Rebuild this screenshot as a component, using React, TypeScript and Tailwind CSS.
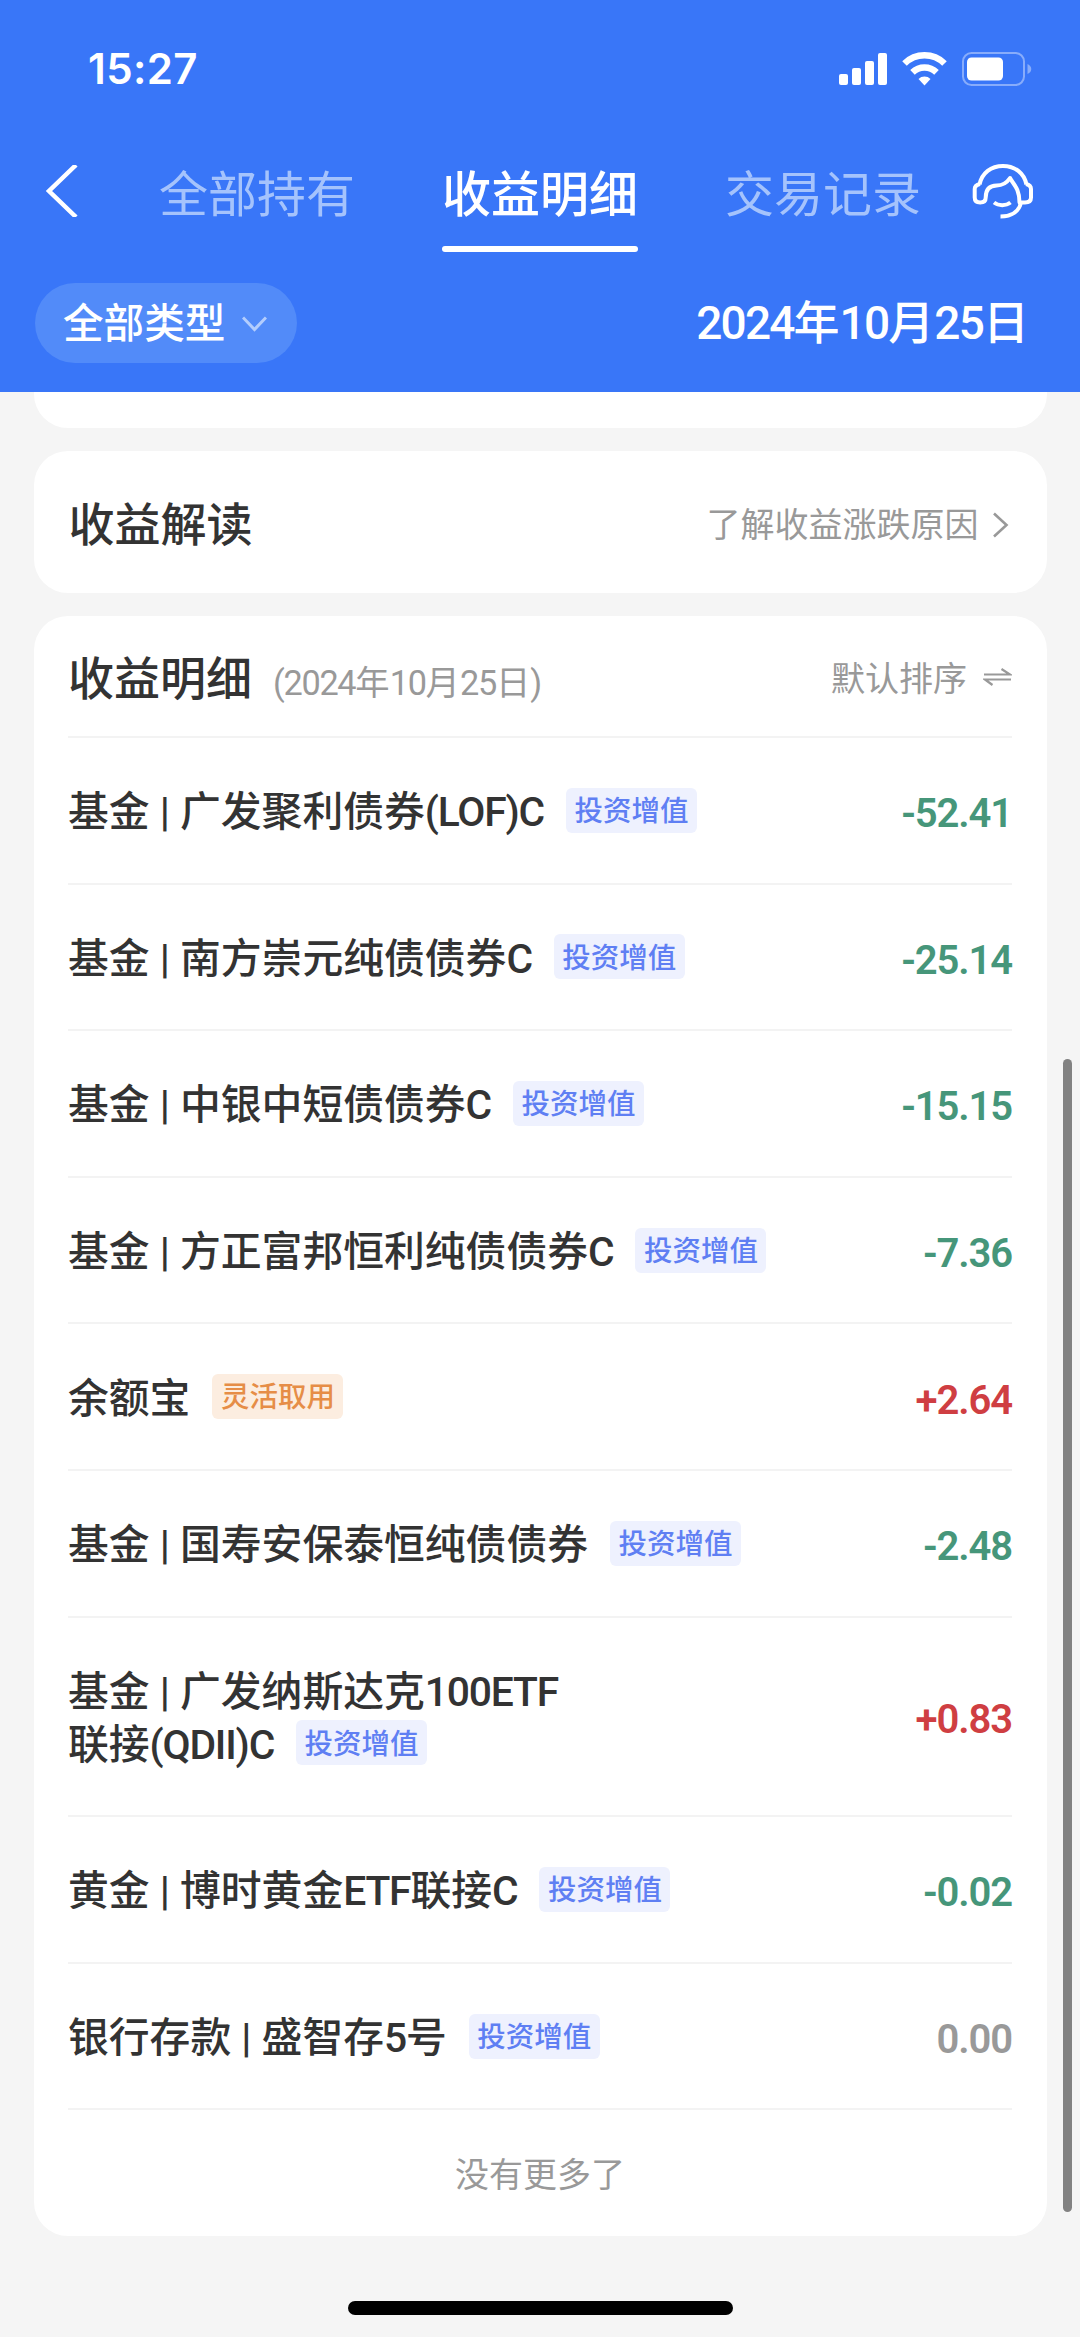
import React from "react";

type Tag = "grow" | "flex";

interface Holding {
  lines: string[];
  tag: Tag;
  amount: string;
}

const holdings: Holding[] = [
  { lines: ["基金 | 广发聚利债券(LOF)C"], tag: "grow", amount: "-52.41" },
  { lines: ["基金 | 南方崇元纯债债券C"], tag: "grow", amount: "-25.14" },
  { lines: ["基金 | 中银中短债债券C"], tag: "grow", amount: "-15.15" },
  { lines: ["基金 | 方正富邦恒利纯债债券C"], tag: "grow", amount: "-7.36" },
  { lines: ["余额宝"], tag: "flex", amount: "+2.64" },
  { lines: ["基金 | 国寿安保泰恒纯债债券"], tag: "grow", amount: "-2.48" },
  { lines: ["基金 | 广发纳斯达克100ETF", "联接(QDII)C"], tag: "grow", amount: "+0.83" },
  { lines: ["黄金 | 博时黄金ETF联接C"], tag: "grow", amount: "-0.02" },
  { lines: ["银行存款 | 盛智存5号"], tag: "grow", amount: "0.00" },
];

const amountColor = (amount: string) => {
  if (amount.startsWith("+")) return "text-[#cf3e42]";
  if (amount.startsWith("-")) return "text-[#46967a]";
  return "text-[#999999]";
};

// Latin letters and digits sit tighter than the Chinese text around them
const Mixed = ({ text, latin }: { text: string; latin: string }) => (
  <>
    {text.split(/([A-Z0-9()]+)/).map((part, i) =>
      i % 2 ? (
        <span key={i} className={latin}>
          {part}
        </span>
      ) : (
        part
      )
    )}
  </>
);

const StatusBar = () => (
  <div className="flex h-[137px] items-center justify-between pl-[88px] pr-[48px]">
    <span className="font-['Inter'] text-[42px] font-semibold leading-none tracking-[0.4px]">15:27</span>
    <div className="flex items-center gap-[15px]">
      <svg width="48" height="34" viewBox="0 0 48 34" fill="currentColor">
        <rect x="0" y="22" width="9" height="11" rx="2" />
        <rect x="13" y="16" width="9" height="17" rx="2" />
        <rect x="26" y="9" width="9" height="24" rx="2" />
        <rect x="39" y="1" width="9" height="32" rx="2" />
      </svg>
      <svg width="45" height="34" viewBox="0 0 45 34" fill="none" stroke="currentColor" strokeWidth="6.500">
        <path d="M2.500 11.500a28.500 28.500 0 0 1 40 0" />
        <path d="M10.500 20.300a17.200 17.200 0 0 1 24 0" />
        <path d="M16.500 27a8.500 8.500 0 0 1 12 0L22.500 33.500z" fill="currentColor" stroke="none" />
      </svg>
      <svg width="70" height="34" viewBox="0 0 70 34" fill="none">
        <rect x="1" y="1" width="61" height="32" rx="8.500" stroke="currentColor" strokeOpacity=".4" strokeWidth="2" />
        <rect x="5" y="5.500" width="36" height="23" rx="4.500" fill="currentColor" />
        <path d="M65.500 12c5 2 5 8 0 10z" fill="currentColor" fillOpacity=".4" />
      </svg>
    </div>
  </div>
);

const Header = () => (
  <header className="h-[392px] shrink-0 bg-[#3976f8] text-white">
    <StatusBar />
    <div className="flex h-[115px] items-start pl-[45px]">
      <svg className="mt-[28px]" width="33" height="52" viewBox="0 0 33 52" fill="none" stroke="currentColor" strokeWidth="4.500">
        <path d="M31 0L4 26l27 26" />
      </svg>
      <nav className="ml-[81px] flex gap-[87px] text-[49px] leading-[72px]">
        <span className="mt-[23px] text-[#a5c3fc]">全部持有</span>
        <span className="mt-[23px] flex flex-col font-medium">
          收益明细
          <i className="mt-[14px] h-[6px] rounded-full bg-white" />
        </span>
        <span className="mt-[23px] text-[#a5c3fc]">交易记录</span>
      </nav>
      <svg className="ml-[51px] mt-[26px]" width="62" height="58" viewBox="0 0 62 58" fill="none" stroke="currentColor" strokeWidth="4" strokeLinejoin="round">
        <path d="M7.500 21.500C10 10 19 3 31 3s21 7 23.500 18.500" />
        <path d="M8 21c-4 1-5.300 2.500-5.300 5v8.500c0 3.500 2 5 5.500 5s5.500-1.500 5.500-5c0-8.500 4-12 11-12 6.500 0 10-2.500 13.300-7.500C41 21 47.500 25 47.500 39.500h5.500c4 0 6-1.500 6-5V26c0-2.500-1.300-4-5-5" />
        <path d="M22 39.500c4.500 3.500 12 3.500 16.500 0M49 39c-1.500 9-9 14.500-20.500 14.500" />
      </svg>
    </div>
    <div className="mt-[31px] flex h-[80px] items-center justify-between pl-[35px] pr-[51px]">
      <button className="flex h-[80px] w-[262px] items-center justify-between rounded-full bg-[#528bf9] pl-[28px] pr-[30px] pt-[3px] text-[40.6px] font-medium leading-none">
        全部类型
        <svg width="25" height="17" viewBox="0 0 25 17" fill="none" stroke="#b3cdfd" strokeWidth="3">
          <path d="M1 1.500L12.500 13.500L24 1.500" />
        </svg>
      </button>
      <span className="text-[46px] font-medium leading-none">
        <Mixed text="2024年10月25日" latin="tracking-[-1.8px]" />
      </span>
    </div>
  </header>
);

const TagLabel = ({ tag }: { tag: Tag }) => (
  <span
    className={`ml-[22px] flex h-[45px] items-center rounded-[6px] px-[8.5px] pt-[4px] text-[28.5px] leading-none ${
      tag === "grow" ? "bg-[#eef1fe] text-[#5f7ff3]" : "bg-[#fcede0] text-[#e68d47]"
    }`}
  >
    {tag === "grow" ? "投资增值" : "灵活取用"}
  </span>
);

const HoldingRow = ({ item }: { item: Holding }) => (
  <li
    className={`flex items-center justify-between border-t-2 border-[#f3f3f3] ${
      item.lines.length > 1 ? "h-[199.6px]" : "h-[146.6px]"
    }`}
  >
    <div className="text-[40.8px] font-medium text-[#333333]">
      {item.lines.map((line, i) => (
        <div key={line} className="flex h-[53px] items-center whitespace-pre leading-[53px]">
          <span className="mt-[5px]">
            <Mixed text={line} latin="tracking-[-1.2px]" />
          </span>
          {i === item.lines.length - 1 && <TagLabel tag={item.tag} />}
        </div>
      ))}
    </div>
    <span className={`mt-[8px] text-[40px] font-semibold leading-none tracking-[-1.1px] ${amountColor(item.amount)}`}>
      {item.amount}
    </span>
  </li>
);

export default function App() {
  return (
    <div
      lang="zh-CN"
      className="relative flex h-[2337px] w-[1080px] flex-col overflow-hidden bg-[#f5f5f5] font-['Roboto','Noto_Sans_CJK_SC',sans-serif]"
    >
      <Header />
      <main className="flex flex-col px-[33.5px]">
        <div className="h-[36px] rounded-b-[34px] bg-white" />

        <section className="mt-[23px] flex h-[142px] items-center justify-between rounded-[34px] bg-white pl-[35px] pr-[38px] pt-[5px]">
          <h2 className="text-[46px] font-medium leading-none text-[#333333]">收益解读</h2>
          <span className="flex items-center text-[34px] leading-none text-[#999999]">
            了解收益涨跌原因
            <svg className="ml-[13px]" width="17" height="26" viewBox="0 0 17 26" fill="none" stroke="currentColor" strokeWidth="2.600">
              <path d="M2 1.500L14.500 13L2 24.500" />
            </svg>
          </span>
        </section>

        <section className="mt-[23px] h-[1620px] rounded-[34px] bg-white px-[34.5px]">
          <div className="flex h-[120px] items-center justify-between pt-[5px]">
            <div className="flex items-baseline leading-none">
              <h2 className="text-[46px] font-medium text-[#333333]">收益明细</h2>
              <span className="ml-[21px] text-[34.3px] text-[#999999]">
                <Mixed text="(2024年10月25日)" latin="tracking-[-1.3px]" />
              </span>
            </div>
            <span className="flex items-center text-[34px] leading-none text-[#999999]">
              默认排序
              <svg className="-mt-[4px] ml-[16px]" width="29" height="20" viewBox="0 0 29 20" fill="none" stroke="currentColor" strokeWidth="2.200">
                <path d="M1 7.500h26L18.500 2M28 12.500H2L9.500 18" />
              </svg>
            </span>
          </div>
          <ul>
            {holdings.map((item) => (
              <HoldingRow key={item.lines[0]} item={item} />
            ))}
          </ul>
          <p className="flex h-[127px] items-center justify-center border-t-2 border-[#f3f3f3] pt-[5px] text-[34px] leading-none text-[#999999]">
            没有更多了
          </p>
        </section>
      </main>

      {/* Scroll thumb and home indicator float over the page */}
      <div className="absolute right-[8px] top-[1059px] h-[1153px] w-[9px] rounded-full bg-[#828282]" />
      <div className="absolute bottom-[22px] left-[348px] h-[14px] w-[385px] rounded-full bg-black" />
    </div>
  );
}
